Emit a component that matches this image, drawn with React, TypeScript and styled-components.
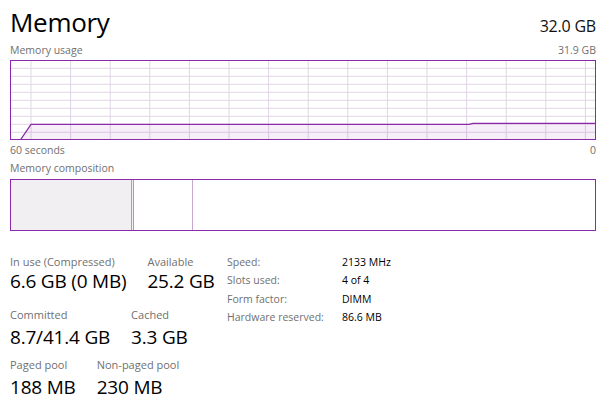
import React from "react";
import styled, { createGlobalStyle } from "styled-components";

const Global = createGlobalStyle`
  html, body { margin: 0; padding: 0; background: #ffffff; }
  body { font-family: "Open Sans", "Noto Sans", sans-serif; color: #000; }
`;

const PURPLE = "#8b2aa8";

const Page = styled.div`
  width: 608px;
  height: 409px;
  box-sizing: border-box;
  padding: 4px 12px 0 10px;
  display: flex;
  flex-direction: column;
  overflow: hidden;
`;

const Header = styled.div`
  display: flex;
  justify-content: space-between;
  align-items: baseline;
`;

const Title = styled.h1`
  margin: 0;
  font-size: 26px;
  font-weight: 400;
  line-height: 36px;
  letter-spacing: -0.3px;
`;

const Total = styled.div`
  font-size: 16px;
  color: #111;
  letter-spacing: -0.2px;
`;

const LabelRow = styled.div<{ $mt?: number }>`
  display: flex;
  justify-content: space-between;
  font-size: 10.5px;
  line-height: 14px;
  color: #707070;
  margin-top: ${(p) => p.$mt ?? 0}px;
`;

const ChartBox = styled.div`
  height: 80px;
  box-sizing: border-box;
  border: 1px solid ${PURPLE};
  margin-top: 3px;
`;

const Comp = styled.div`
  height: 52px;
  box-sizing: border-box;
  border: 1px solid ${PURPLE};
  margin-top: 4px;
  display: flex;
`;

const Seg = styled.div<{ $w: number; $bg: string; $edge: string }>`
  width: ${(p) => p.$w}px;
  background: ${(p) => p.$bg};
  border-right: ${(p) => p.$edge};
  box-sizing: border-box;
`;

const Stats = styled.div`
  display: flex;
  align-items: flex-start;
  margin-top: 24px;
`;

const LeftStats = styled.div`
  display: flex;
  flex-direction: column;
  width: 217px;
`;

const StatRow = styled.div<{ $mt: number }>`
  display: flex;
  gap: 21px;
  margin-top: ${(p) => p.$mt}px;
`;

const Stat = styled.div<{ $gap: number }>`
  display: flex;
  flex-direction: column;
  gap: ${(p) => p.$gap}px;
`;

const StatLabel = styled.div`
  font-size: 11px;
  line-height: 14px;
  color: #707070;
`;

const StatValue = styled.div`
  font-size: 19px;
  line-height: 24px;
  color: #000;
  letter-spacing: -0.2px;
`;

const Details = styled.div`
  display: grid;
  grid-template-columns: 115px auto;
  row-gap: 4.3px;
  font-size: 10.5px;
  line-height: 14px;
`;

const DKey = styled.div`
  color: #707070;
`;

const DVal = styled.div`
  color: #000;
`;

function UsageChart() {
  const W = 584;
  const H = 78;
  const vx: number[] = [];
  for (let i = 0; i < 15; i++) vx.push(20 + i * 39.6);
  const hy: number[] = [];
  for (let i = 0; i < 9; i++) hy.push(7.3 + i * 8);
  const pts = "10,78 20,63.3 458,63.3 462,62.3 584,62.3";
  return (
    <svg width="100%" height="100%" viewBox={`0 0 ${W} ${H}`} preserveAspectRatio="none" style={{ display: "block" }}>
      {vx.map((x) => (
        <line key={"v" + x} x1={x} x2={x} y1={0} y2={H} stroke="#e1d6e5" strokeWidth={1} />
      ))}
      {hy.map((y) => (
        <line key={"h" + y} x1={0} x2={W} y1={y} y2={y} stroke="#e1d6e5" strokeWidth={1} />
      ))}
      <polygon points={`${pts} 584,78`} fill="#8b2aa8" fillOpacity={0.08} />
      <polyline points={pts} fill="none" stroke={PURPLE} strokeWidth={1.3} />
    </svg>
  );
}

const rows = [
  { mt: 0, gap: -4, items: [["In use (Compressed)", "6.6 GB (0 MB)"], ["Available", "25.2 GB"]] },
  { mt: 15, gap: 3, items: [["Committed", "8.7/41.4 GB"], ["Cached", "3.3 GB"]] },
  { mt: 9, gap: 3, items: [["Paged pool", "188 MB"], ["Non-paged pool", "230 MB"]] },
];

const details = [
  ["Speed:", "2133 MHz"],
  ["Slots used:", "4 of 4"],
  ["Form factor:", "DIMM"],
  ["Hardware reserved:", "86.6 MB"],
];

export default function App() {
  return (
    <>
      <Global />
      <Page>
        <Header>
          <Title>Memory</Title>
          <Total>32.0 GB</Total>
        </Header>
        <LabelRow $mt={3}>
          <span>Memory usage</span>
          <span>31.9 GB</span>
        </LabelRow>
        <ChartBox>
          <UsageChart />
        </ChartBox>
        <LabelRow $mt={3}>
          <span>60 seconds</span>
          <span>0</span>
        </LabelRow>
        <LabelRow $mt={4}>
          <span>Memory composition</span>
        </LabelRow>
        <Comp>
          <Seg $w={123} $bg="#f1eff2" $edge="3px double #b994c6" />
          <Seg $w={59} $bg="#ffffff" $edge="1px solid #c6a8d0" />
        </Comp>
        <Stats>
          <LeftStats>
            {rows.map((r, i) => (
              <StatRow key={i} $mt={r.mt}>
                {r.items.map(([l, v]) => (
                  <Stat key={l} $gap={r.gap}>
                    <StatLabel>{l}</StatLabel>
                    <StatValue>{v}</StatValue>
                  </Stat>
                ))}
              </StatRow>
            ))}
          </LeftStats>
          <Details>
            {details.map(([k, v]) => (
              <React.Fragment key={k}>
                <DKey>{k}</DKey>
                <DVal>{v}</DVal>
              </React.Fragment>
            ))}
          </Details>
        </Stats>
      </Page>
    </>
  );
}
